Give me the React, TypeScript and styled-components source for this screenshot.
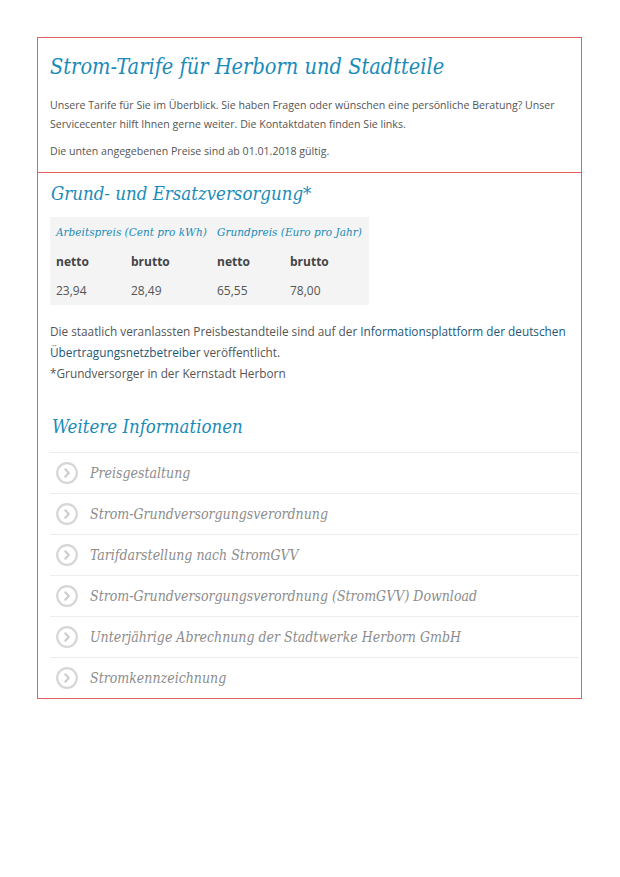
import React from 'react'
import styled, { createGlobalStyle } from 'styled-components'

const GlobalStyle = createGlobalStyle`
  html, body {
    margin: 0;
    padding: 0;
    background: #fff;
  }
  body {
    font-family: "Open Sans", "Liberation Sans", sans-serif;
    color: #555;
  }
`

const serif = `"DejaVu Serif Condensed", "DejaVu Serif", "Liberation Serif", serif`

const Page = styled.div`
  padding: 37px 38px 0 37px;
  width: 545px;
`

const Section = styled.section<{ $first?: boolean }>`
  border-style: solid;
  border-color: rgb(226, 96, 96);
  border-width: ${p => (p.$first ? '1px' : '0 1px 1px 1px')};
  padding: ${p => (p.$first ? '14px 2px 3px 12px' : '8px 2px 0 12px')};
`

const Title = styled.h1`
  margin: 0 0 14px;
  font-family: ${serif};
  font-style: italic;
  font-weight: normal;
  font-size: 21.6px;
  line-height: 30px;
  color: #1a8bb8;
`

const SubTitle = styled.h2<{ $spaced?: boolean }>`
  margin: ${p => (p.$spaced ? '30px 0 12px 2px' : '0 0 10px 1px')};
  font-family: ${serif};
  font-style: italic;
  font-weight: normal;
  font-size: 18.5px;
  line-height: 26px;
  color: #1a8bb8;
`

const Intro = styled.p`
  margin: 0 0 8px;
  font-size: 10.6px;
  line-height: 19px;
  color: #555;
  padding-right: 14px;
`

const Note = styled.p`
  margin: 16px 0 0;
  font-size: 11.8px;
  line-height: 21px;
  color: #555;
  padding-right: 10px;
`

const Link = styled.a`
  color: #1b5877;
  text-decoration: none;
`

const PriceTable = styled.table`
  border-collapse: collapse;
  background: #f4f4f4;
  table-layout: fixed;
  width: 319px;
`

const HeadCell = styled.th`
  padding: 0 0 0 6px;
  height: 29px;
  text-align: left;
  font-family: ${serif};
  font-style: italic;
  font-weight: normal;
  font-size: 11.7px;
  color: #1a8bb8;
  white-space: nowrap;
`

const LabelCell = styled.td`
  padding: 0 0 0 6px;
  height: 30px;
  font-weight: 700;
  font-size: 12px;
  color: #444;
`

const ValueCell = styled.td`
  padding: 0 0 0 6px;
  height: 29px;
  font-size: 12px;
  color: #555;
`

const LinkList = styled.ul`
  list-style: none;
  margin: 0;
  padding: 0;
`

const LinkItem = styled.li`
  display: flex;
  align-items: center;
  gap: 12px;
  height: 40px;
  border-top: 1px solid #ececec;
  padding-left: 6px;
  font-family: ${serif};
  font-style: italic;
  font-size: 14px;
  color: #8c8c8c;
`

const Chevron = () => (
  <svg width="22" height="22" viewBox="0 0 22 22" fill="none">
    <circle cx="11" cy="11" r="9.8" stroke="#d6d6d6" strokeWidth="2.2" />
    <path d="M9.3 7.3 L12.8 11 L9.3 14.7" stroke="#cdcdcd" strokeWidth="2.2" strokeLinecap="round" strokeLinejoin="round" />
  </svg>
)

const links = [
  'Preisgestaltung',
  'Strom-Grundversorgungsverordnung',
  'Tarifdarstellung nach StromGVV',
  'Strom-Grundversorgungsverordnung (StromGVV) Download',
  'Unterjährige Abrechnung der Stadtwerke Herborn GmbH',
  'Stromkennzeichnung',
]

export default function App() {
  return (
    <>
      <GlobalStyle />
      <Page>
        <Section $first>
          <Title>Strom-Tarife für Herborn und Stadtteile</Title>
          <Intro>
            Unsere Tarife für Sie im Überblick. Sie haben Fragen oder wünschen eine persönliche Beratung? Unser
            Servicecenter hilft Ihnen gerne weiter. Die Kontaktdaten finden Sie links.
          </Intro>
          <Intro>Die unten angegebenen Preise sind ab 01.01.2018 gültig.</Intro>
        </Section>
        <Section>
          <SubTitle>Grund- und Ersatzversorgung*</SubTitle>
          <PriceTable>
            <colgroup>
              <col style={{ width: 75 }} />
              <col style={{ width: 86 }} />
              <col style={{ width: 73 }} />
              <col style={{ width: 85 }} />
            </colgroup>
            <thead>
              <tr>
                <HeadCell colSpan={2}>Arbeitspreis (Cent pro kWh)</HeadCell>
                <HeadCell colSpan={2}>Grundpreis (Euro pro Jahr)</HeadCell>
              </tr>
            </thead>
            <tbody>
              <tr>
                <LabelCell>netto</LabelCell>
                <LabelCell>brutto</LabelCell>
                <LabelCell>netto</LabelCell>
                <LabelCell>brutto</LabelCell>
              </tr>
              <tr>
                <ValueCell>23,94</ValueCell>
                <ValueCell>28,49</ValueCell>
                <ValueCell>65,55</ValueCell>
                <ValueCell>78,00</ValueCell>
              </tr>
            </tbody>
          </PriceTable>
          <Note>
            Die staatlich veranlassten Preisbestandteile sind auf der{' '}
            <Link href="#">Informationsplattform der deutschen Übertragungsnetzbetreiber</Link> veröffentlicht.
            <br />
            *Grundversorger in der Kernstadt Herborn
          </Note>
          <SubTitle $spaced>Weitere Informationen</SubTitle>
          <LinkList>
            {links.map(l => (
              <LinkItem key={l}>
                <Chevron />
                {l}
              </LinkItem>
            ))}
          </LinkList>
        </Section>
      </Page>
    </>
  )
}
